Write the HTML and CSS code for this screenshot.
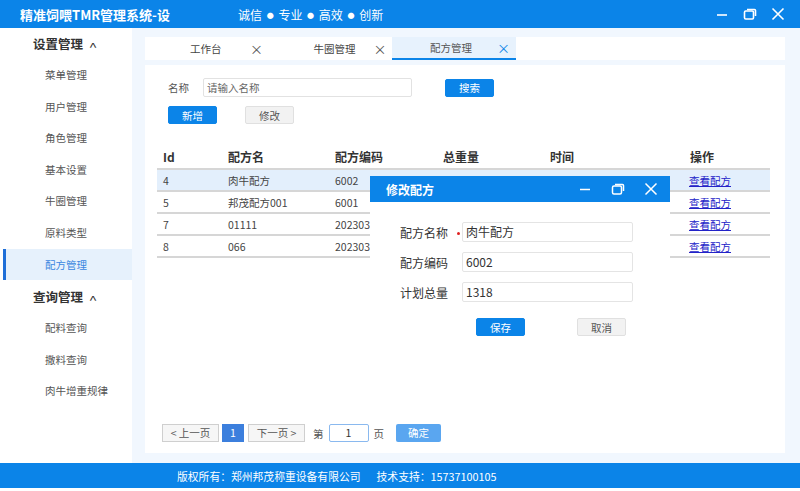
FILE: index.html
```html
<!DOCTYPE html>
<html lang="zh-CN">
<head>
<meta charset="utf-8">
<title>精准饲喂TMR管理系统</title>
<link rel="stylesheet" href="styles.css">
</head>
<body>
<div class="app">
  <header class="titlebar">
    <div class="app-title">精准饲喂TMR管理系统-设</div>
    <div class="slogan">诚信 <span class="dot">●</span> 专业 <span class="dot">●</span> 高效 <span class="dot">●</span> 创新</div>
    <div class="win-ctrls">
      <svg class="wc wc-min" width="14" height="14" viewBox="0 0 14 14"><path d="M2 8h10" stroke="#fff" stroke-width="1.6"/></svg>
      <svg class="wc wc-max" width="14" height="14" viewBox="0 0 14 14"><rect x="1.5" y="4" width="9" height="8" rx="1.2" fill="none" stroke="#fff" stroke-width="1.6"/><path d="M4 2.5h7.5a1 1 0 0 1 1 1V9" fill="none" stroke="#fff" stroke-width="1.6"/></svg>
      <svg class="wc wc-close" width="14" height="14" viewBox="0 0 14 14"><path d="M1.5 1.5l11 11M12.5 1.5l-11 11" stroke="#fff" stroke-width="1.6"/></svg>
    </div>
  </header>

  <div class="middle">
    <aside class="sidebar">
      <div class="menu-group">设置管理 <span class="caret">^</span></div>
      <div class="menu-item">菜单管理</div>
      <div class="menu-item">用户管理</div>
      <div class="menu-item">角色管理</div>
      <div class="menu-item">基本设置</div>
      <div class="menu-item">牛圈管理</div>
      <div class="menu-item">原料类型</div>
      <div class="menu-item active">配方管理</div>
      <div class="menu-group menu-group-2">查询管理 <span class="caret">^</span></div>
      <div class="menu-item">配料查询</div>
      <div class="menu-item">撒料查询</div>
      <div class="menu-item">肉牛增重规律</div>
    </aside>

    <main class="main">
      <nav class="tabs">
        <div class="tab"><span class="tab-label">工作台</span><span class="tab-x">×</span></div>
        <div class="tab"><span class="tab-label">牛圈管理</span><span class="tab-x">×</span></div>
        <div class="tab active"><span class="tab-label">配方管理</span><span class="tab-x">×</span></div>
      </nav>

      <section class="panel">
        <div class="search-row">
          <span class="field-label">名称</span>
          <div class="text-input placeholder">请输入名称</div>
          <button class="btn btn-primary btn-search">搜索</button>
        </div>
        <div class="action-row">
          <button class="btn btn-primary">新增</button>
          <button class="btn btn-default">修改</button>
        </div>

        <table class="grid">
          <colgroup>
            <col class="c-id"><col class="c-name"><col class="c-code"><col class="c-weight"><col class="c-time"><col class="c-op">
          </colgroup>
          <thead>
            <tr><th>Id</th><th>配方名</th><th>配方编码</th><th>总重量</th><th>时间</th><th>操作</th></tr>
          </thead>
          <tbody>
            <tr class="selected"><td>4</td><td>肉牛配方</td><td>6002</td><td></td><td></td><td><a class="link">查看配方</a></td></tr>
            <tr><td>5</td><td>邦茂配方001</td><td>6001</td><td></td><td></td><td><a class="link">查看配方</a></td></tr>
            <tr><td>7</td><td>01111</td><td>202303</td><td></td><td></td><td><a class="link">查看配方</a></td></tr>
            <tr><td>8</td><td>066</td><td>202303</td><td></td><td></td><td><a class="link">查看配方</a></td></tr>
          </tbody>
        </table>

        <div class="pager">
          <span class="pg-btn">&lt; 上一页</span>
          <span class="pg-num">1</span>
          <span class="pg-btn">下一页 &gt;</span>
          <span class="pg-text">第</span>
          <span class="pg-input">1</span>
          <span class="pg-text">页</span>
          <span class="pg-go">确定</span>
        </div>
      </section>
    </main>
  </div>

  <footer class="footer">
    <span>版权所有：郑州邦茂称重设备有限公司</span>
    <span>技术支持：15737100105</span>
  </footer>
</div>

<div class="dialog">
  <div class="dlg-head">
    <span class="dlg-title">修改配方</span>
    <div class="dlg-ctrls">
      <svg width="14" height="14" viewBox="0 0 14 14"><path d="M2 7.5h10" stroke="#fff" stroke-width="1.5"/></svg>
      <svg width="14" height="14" viewBox="0 0 14 14"><rect x="1.5" y="4" width="9" height="8" rx="1.5" fill="none" stroke="#fff" stroke-width="1.5"/><path d="M4 2.5h7.5a1 1 0 0 1 1 1V9" fill="none" stroke="#fff" stroke-width="1.5"/></svg>
      <svg width="14" height="14" viewBox="0 0 14 14"><path d="M1.5 1.5l11 11M12.5 1.5l-11 11" stroke="#fff" stroke-width="1.5"/></svg>
    </div>
  </div>
  <div class="dlg-body">
    <div class="dlg-row"><span class="dlg-label">配方名称<i class="req"></i></span><div class="dlg-input">肉牛配方</div></div>
    <div class="dlg-row"><span class="dlg-label">配方编码</span><div class="dlg-input">6002</div></div>
    <div class="dlg-row"><span class="dlg-label">计划总量</span><div class="dlg-input">1318</div></div>
    <div class="dlg-btns">
      <button class="btn btn-primary">保存</button>
      <button class="btn btn-default">取消</button>
    </div>
  </div>
</div>
</body>
</html>
```

FILE: styles.css
```css
* { box-sizing: border-box; }
html, body { margin: 0; padding: 0; }
body {
  width: 800px;
  height: 491px;
  overflow: hidden;
  background: #fff;
  font-family: "Noto Sans CJK SC", "Noto Sans", sans-serif;
  color: #333;
  position: relative;
}
.app { display: flex; flex-direction: column; height: 488px; }

.titlebar {
  height: 28px;
  flex: none;
  background: #0b84e8;
  color: #fff;
  display: flex;
  align-items: center;
  padding-left: 20px;
}
.app-title { width: 218px; font-size: 13px; font-weight: bold; }
.slogan { font-size: 12px; }
.slogan .dot { font-size: 7px; margin: 0 2px; position: relative; top: -2px; }
.win-ctrls { margin-left: auto; display: flex; align-items: center; gap: 14px; padding-right: 15px; }
.wc { display: block; }

.middle { flex: 1; display: flex; background: #f1f7fe; min-height: 0; }

.sidebar {
  width: 132px;
  flex: none;
  background: #fff;
  padding-top: 1px;
}
.menu-group {
  height: 30px;
  line-height: 30px;
  padding-left: 33px;
  font-size: 12.5px;
  font-weight: bold;
  color: #333;
}
.menu-group-2 { height: 32px; line-height: 33px; }
.caret { display: inline-block; font-weight: normal; font-size: 11px; transform: scaleX(1.4); margin-left: 4px; position: relative; top: 2px; }
.menu-item {
  height: 31.6px;
  line-height: 31.6px;
  padding-left: 45px;
  font-size: 10.5px;
  color: #555;
}
.menu-item.active {
  background: #e6f1fc;
  color: #3a87e0;
  margin-left: 3px;
  padding-left: 39px;
  border-left: 3px solid #1f6fd8;
}

.main {
  flex: 1;
  display: flex;
  flex-direction: column;
  padding: 9px 15px 10px 13px;
  min-width: 0;
}
.tabs {
  height: 23px;
  background: #fff;
  display: flex;
  flex: none;
}
.tab {
  width: 123.5px;
  display: flex;
  align-items: center;
  font-size: 10.5px;
  color: #444;
  position: relative;
}
.tab-label { margin-left: 45px; }
.tab-x { position: absolute; left: 105px; font-size: 13px; color: #555; }
.tab.active { background: #e7f2fd; border-bottom: 2px solid #0b84e8; }
.tab.active .tab-x { color: #0b84e8; }
.tab.active .tab-label { margin-left: 38px; color: #555; }

.panel {
  margin-top: 5px;
  flex: 1;
  background: #fff;
  display: flex;
  flex-direction: column;
  padding: 13px 15px 11px 12px;
  position: relative;
}
.search-row { display: flex; align-items: center; padding-left: 11px; height: 19px; }
.field-label { font-size: 10.5px; color: #555; width: 35px; }
.text-input {
  width: 209px;
  height: 19px;
  border: 1px solid #e2e2e2;
  border-radius: 2px;
  font-size: 10.5px;
  line-height: 17px;
  padding-left: 3px;
}
.placeholder { color: #666; }
.btn {
  font-family: inherit;
  font-size: 10.5px;
  width: 49px;
  height: 18px;
  padding: 0;
  border-radius: 2px;
  border: 1px solid transparent;
  cursor: pointer;
}
.btn-primary { background: #0b84e8; color: #fff; border-color: #0b84e8; }
.btn-default { background: #f2f2f2; color: #555; border-color: #e0e0e0; }
.btn-search { margin-left: 33px; }
.action-row { display: flex; gap: 28px; padding-left: 11px; margin-top: 9px; }

.grid {
  margin-top: 20px;
  width: 613px;
  border-collapse: collapse;
  table-layout: fixed;
}
.c-id { width: 65px; }
.c-name { width: 107px; }
.c-code { width: 108px; }
.c-weight { width: 107px; }
.c-time { width: 140px; }
.c-op { width: 86px; }
.grid th {
  text-align: left;
  font-size: 12px;
  font-weight: bold;
  color: #333;
  height: 25px;
  padding: 0 0 0 6px;
  border-bottom: 2px solid #d6d6d6;
}
.grid td {
  font-size: 10.5px;
  color: #444;
  height: 22px;
  padding: 0 0 0 6px;
  border-bottom: 2px solid #d6d6d6;
  white-space: nowrap;
  overflow: hidden;
}
.grid tr.selected td { background: #e3effc; }
.grid td:last-child { padding-left: 5px; }
.link { color: #2323c8; text-decoration: underline; font-size: 10.5px; }

.pager {
  margin-top: auto;
  display: flex;
  align-items: center;
  padding-left: 5px;
  height: 18px;
  font-size: 10.5px;
  color: #555;
}
.pg-btn {
  height: 18px;
  line-height: 16px;
  border: 1px solid #cfcfcf;
  background: #f6f6f6;
  padding: 0 5px;
  width: 57px;
  text-align: center;
}
.pg-num {
  height: 18px;
  width: 22px;
  line-height: 18px;
  text-align: center;
  background: #3c7fdd;
  color: #fff;
  margin: 0 4px 0 3px;
}
.pg-text { margin: 0 5px 0 8px; }
.pg-text + .pg-input + .pg-text { margin: 0 0 0 5px; }
.pg-input {
  width: 40px;
  height: 18px;
  line-height: 16px;
  border: 1px solid #8ab9ef;
  border-radius: 2px;
  text-align: center;
  color: #333;
}
.pg-go {
  margin-left: 12px;
  width: 45px;
  height: 18px;
  line-height: 18px;
  text-align: center;
  background: #5aa6f0;
  color: #fff;
  border-radius: 2px;
}

.footer {
  height: 25px;
  flex: none;
  background: #0b84e8;
  color: #fff;
  font-size: 10.8px;
  display: flex;
  align-items: center;
  gap: 16px;
  padding-left: 177px;
}

.dialog {
  position: absolute;
  left: 370px;
  top: 176px;
  width: 300px;
  background: #fff;
}
.dlg-head {
  height: 26px;
  background: #0b84e8;
  display: flex;
  align-items: center;
  padding-left: 16px;
  padding-right: 12px;
}
.dlg-title { color: #fff; font-size: 12px; font-weight: bold; }
.dlg-ctrls { margin-left: auto; display: flex; gap: 19px; align-items: center; }
.dlg-ctrls svg { display: block; }
.dlg-body { padding: 20px 0 10px 30px; }
.dlg-row { display: flex; align-items: center; height: 20px; margin-bottom: 10px; }
.dlg-label { width: 62px; font-size: 12px; color: #333; position: relative; }
.req {
  position: absolute;
  left: 57px;
  top: 8px;
  width: 3px;
  height: 3px;
  border-radius: 50%;
  background: #e02020;
}
.dlg-input {
  width: 171px;
  height: 20px;
  border: 1px solid #e4e4e4;
  border-radius: 2px;
  font-size: 12px;
  line-height: 18px;
  padding-left: 3px;
  color: #333;
}
.dlg-btns { display: flex; gap: 52px; padding-left: 76px; margin-top: 16px; }
```
